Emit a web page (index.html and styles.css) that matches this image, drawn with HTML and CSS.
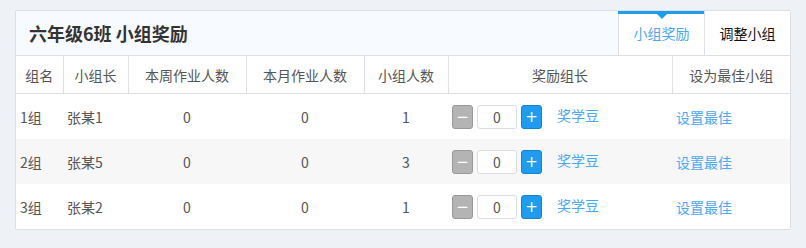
FILE: index.html
```html
<!DOCTYPE html>
<html lang="zh-CN">
<head>
    <meta charset="UTF-8">
    <title>小组奖励</title>
    <link rel="stylesheet" href="styles.css">
</head>
<body>
    <div class="panel">
        <div class="panel-head">
            <h2 class="title">六年级6班 小组奖励</h2>
            <div class="tabs">
                <span class="tab active">小组奖励</span>
                <span class="tab">调整小组</span>
            </div>
        </div>

        <table class="groups">
            <colgroup>
                <col class="c-name">
                <col class="c-leader">
                <col class="c-week">
                <col class="c-month">
                <col class="c-count">
                <col class="c-reward">
                <col class="c-best">
            </colgroup>
            <thead>
                <tr>
                    <th>组名</th>
                    <th>小组长</th>
                    <th>本周作业人数</th>
                    <th>本月作业人数</th>
                    <th>小组人数</th>
                    <th>奖励组长</th>
                    <th>设为最佳小组</th>
                </tr>
            </thead>
            <tbody>
                <tr>
                    <td class="left">1组</td>
                    <td class="left">张某1</td>
                    <td>0</td>
                    <td>0</td>
                    <td>1</td>
                    <td class="left">
                        <div class="stepper">
                            <button class="btn minus">−</button>
                            <input class="num" type="text" value="0">
                            <button class="btn plus">+</button>
                            <a class="link award" href="#">奖学豆</a>
                        </div>
                    </td>
                    <td class="left"><a class="link" href="#">设置最佳</a></td>
                </tr>
                <tr class="alt">
                    <td class="left">2组</td>
                    <td class="left">张某5</td>
                    <td>0</td>
                    <td>0</td>
                    <td>3</td>
                    <td class="left">
                        <div class="stepper">
                            <button class="btn minus">−</button>
                            <input class="num" type="text" value="0">
                            <button class="btn plus">+</button>
                            <a class="link award" href="#">奖学豆</a>
                        </div>
                    </td>
                    <td class="left"><a class="link" href="#">设置最佳</a></td>
                </tr>
                <tr>
                    <td class="left">3组</td>
                    <td class="left">张某2</td>
                    <td>0</td>
                    <td>0</td>
                    <td>1</td>
                    <td class="left">
                        <div class="stepper">
                            <button class="btn minus">−</button>
                            <input class="num" type="text" value="0">
                            <button class="btn plus">+</button>
                            <a class="link award" href="#">奖学豆</a>
                        </div>
                    </td>
                    <td class="left"><a class="link" href="#">设置最佳</a></td>
                </tr>
            </tbody>
        </table>
    </div>
</body>
</html>
```

FILE: styles.css
```css
:root {
    --blue: #1e9cf2;
    --link: #4ba8f2;
    --line: #dcdfe6;
    --text: #555;
}

body {
    margin: 0;
    padding: 10px 15px;
    background-color: #eef1f6;
    font-family: "Noto Sans CJK SC", "Noto Sans", sans-serif;
    font-size: 14px;
    color: var(--text);
}

.panel {
    width: 774px;
    background-color: #fff;
    border: 1px solid var(--line);
    border-radius: 2px;
}

.panel-head {
    display: flex;
    justify-content: space-between;
    height: 44px;
    background-color: #f7fbff;
    border-bottom: 1px solid var(--line);
}

.title {
    margin: 0;
    padding-left: 13px;
    font-size: 18px;
    font-weight: 700;
    line-height: 44px;
    color: #333;
}

.tabs {
    display: flex;
}

.tab {
    position: relative;
    width: 85px;
    text-align: center;
    line-height: 44px;
    background-color: #fff;
    border-left: 1px solid var(--line);
    color: #111;
}

.tab.active {
    color: var(--link);
}

.tab.active::before {
    content: "";
    position: absolute;
    left: -1px;
    right: 0;
    top: 0;
    height: 3px;
    background-color: var(--blue);
}

.tab.active::after {
    content: "";
    position: absolute;
    left: 50%;
    top: 3px;
    margin-left: -5px;
    border-left: 5px solid transparent;
    border-right: 5px solid transparent;
    border-top: 5px solid var(--blue);
}

.groups {
    width: 774px;
    table-layout: fixed;
    border-collapse: collapse;
}

.c-name { width: 47px; }
.c-leader { width: 65px; }
.c-week { width: 118px; }
.c-month { width: 118px; }
.c-count { width: 84px; }
.c-reward { width: 224px; }
.c-best { width: 118px; }

.groups th {
    height: 37px;
    padding: 0;
    font-weight: 400;
    color: var(--text);
    border-bottom: 1px solid var(--line);
    border-left: 1px solid var(--line);
}

.groups th:first-child {
    border-left: none;
}

.groups td {
    height: 45px;
    padding: 0;
    text-align: center;
}

.groups td.left {
    text-align: left;
    padding-left: 4px;
}

.groups tr.alt td {
    background-color: #f7f7f7;
}

.stepper {
    display: flex;
    align-items: center;
    gap: 4px;
}

.btn {
    width: 21px;
    height: 24px;
    padding: 0;
    border-radius: 3px;
    font-family: "DejaVu Sans", sans-serif;
    font-size: 15px;
    line-height: 20px;
    color: #fff;
    cursor: pointer;
}

.minus {
    background-color: #b4b4b4;
    border: 1px solid #999;
}

.plus {
    background-color: var(--blue);
    border: 1px solid #1683cf;
}

.num {
    width: 40px;
    height: 24px;
    box-sizing: border-box;
    padding: 0;
    border: 1px solid #ddd;
    border-radius: 3px;
    text-align: center;
    font-family: inherit;
    font-size: 14px;
    color: var(--text);
}

.link {
    color: var(--link);
    text-decoration: none;
}

.award {
    margin-left: 11px;
    margin-top: -4px;
}
```
